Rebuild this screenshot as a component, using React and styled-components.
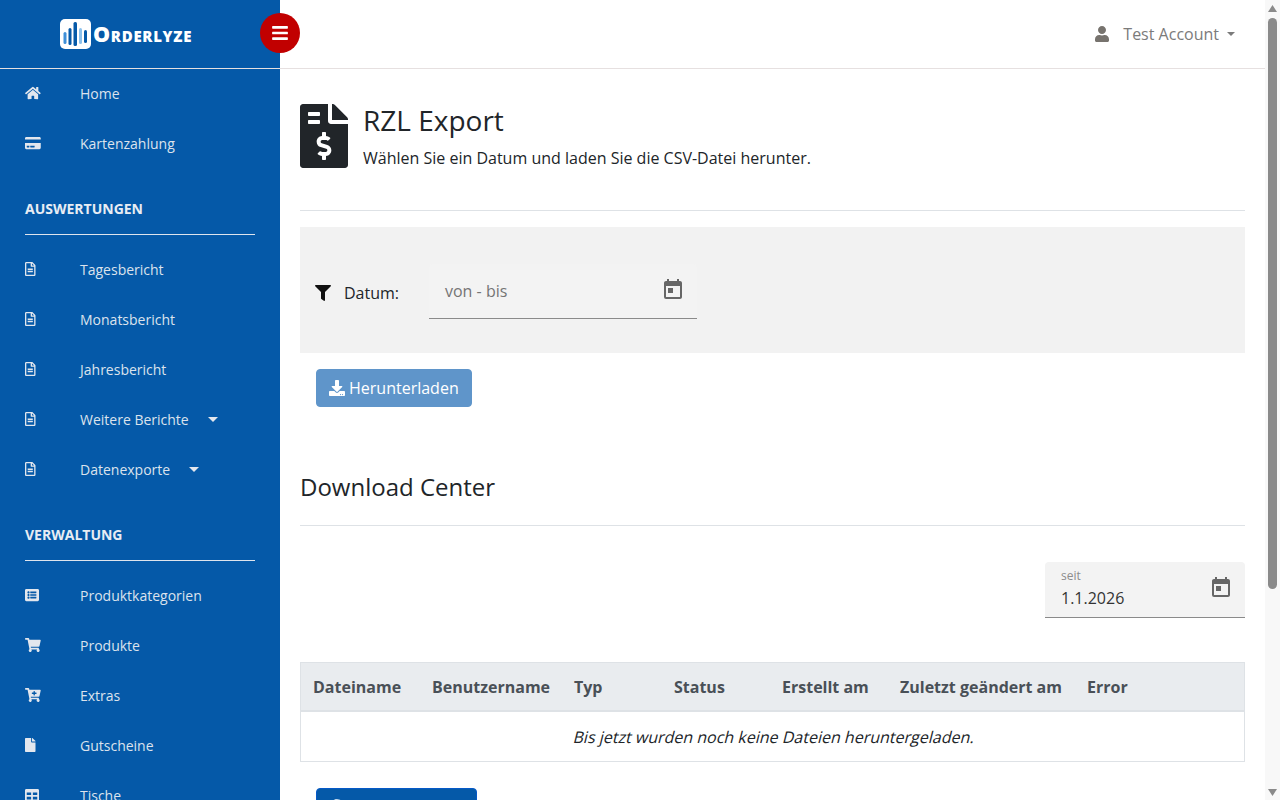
import React from 'react';
import styled, { createGlobalStyle } from 'styled-components';
import { FaHome, FaCreditCard, FaRegFileAlt, FaListAlt, FaShoppingCart, FaCartPlus, FaFile, FaTable, FaBars, FaUser, FaFilter, FaDownload, FaFileInvoiceDollar, FaSyncAlt } from 'react-icons/fa';
import { MdToday } from 'react-icons/md';

const Global = createGlobalStyle`
  * { box-sizing: border-box; }
  html, body { margin: 0; padding: 0; }
  body { font-family: "Open Sans", "Liberation Sans", sans-serif; font-size: 16px; color: #212529; background: #fff; }
`;

const Page = styled.div`display: flex; align-items: flex-start; min-height: 1077px; padding-right: 15px;`;
const ScrollRail = styled.div`
  position: fixed; top: 0; right: 0; bottom: 0; width: 15px; z-index: 5; background: #f8f8f8;
  display: flex; flex-direction: column; align-items: center;
`;
const ScrollArrow = styled.svg`flex: none; width: 15px; height: 17px; fill: #8a8a8a; display: block;`;
const ScrollThumb = styled.div`flex: none; width: 9px; height: 571px; margin-top: 1px; border-radius: 5px; background: #8a8a8a;`;
const ScrollFill = styled.div`flex: 1;`;
const Sidebar = styled.aside`
  position: sticky; top: 0; flex: 0 0 280px; width: 280px; height: 100vh; overflow: hidden;
  background: #0559a8; color: #dfe5ee;
`;
const Brand = styled.div`
  height: 69px; border-bottom: 1px solid #e6e0e0; display: flex; align-items: center; padding: 0 0 0 60px; gap: 2px;
`;
const BrandText = styled.span`
  color: #fff; font-weight: 800; font-size: 21.5px; font-variant: small-caps; letter-spacing: 0.7px; line-height: 1; margin-top: -1px;
`;
const Nav = styled.nav`display: flex; flex-direction: column; margin-top: -1px;`;
const Item = styled.a`
  height: 50px; flex: none; display: flex; align-items: center; padding-left: 25px; font-size: 14px; color: #dce3ed;
`;
const IconSlot = styled.span`
  flex: 0 0 55px; width: 55px; display: flex; align-items: center; color: #e3e7ee;
  & > svg { height: 14px; width: 16px; }
`;
const Caret = styled.span`
  width: 0; height: 0; margin-left: ${p => p.$gap || 19}px;
  border-left: 5px solid transparent; border-right: 5px solid transparent; border-top: 5px solid #e3e7ee;
`;
const SectionTitle = styled.div`
  margin: 16px 25px 9px; height: 51px; border-bottom: 1px solid #dfe5ee; padding-top: 15px;
  font-size: 14px; font-weight: 700; color: #e8edf4; text-transform: uppercase; line-height: 19px;
`;
const Main = styled.main`flex: 1; min-width: 0;`;
const Topbar = styled.header`
  height: 69px; border-bottom: 1px solid #e6e0e0; display: flex; align-items: center; justify-content: space-between; padding: 0 30px 0 0;
`;
const Toggle = styled.button`
  position: relative; z-index: 2;
  width: 40px; height: 40px; border-radius: 50%; border: 0; background: #c10000; color: #fff; padding: 0; margin: -3px 0 0 -20px;
  display: flex; align-items: center; justify-content: center; font-size: 18px;
`;
const Account = styled.div`
  display: flex; align-items: center; color: #7b7b7b; font-size: 16px; margin-top: -1px;
  & > svg { height: 16px; width: 14px; margin-right: 14px; color: #77736e; }
`;
const AccountCaret = styled.span`
  width: 0; height: 0; margin-left: 8px; border-left: 4.5px solid transparent; border-right: 4.5px solid transparent; border-top: 4.5px solid #7b7b7b;
`;
const Content = styled.div`padding: 35px 20px 0;`;
const TitleRow = styled.div`display: flex; align-items: flex-start; gap: 15px; height: 107px; border-bottom: 1px solid #dee2e6;`;
const TitleIcon = styled.div`line-height: 0; color: #212529; & svg { display: block; width: 48px; height: 64px; }`;
const TitleText = styled.div`display: flex; flex-direction: column;`;
const H1 = styled.h1`margin: -1px 0 0; font-size: 28px; font-weight: 400; line-height: 34px;`;
const Sub = styled.p`margin: 9px 0 0; font-size: 16px; line-height: 24px;`;
const FilterPanel = styled.section`
  margin-top: 16px; height: 126px; background: #f2f2f2; display: flex; align-items: center; padding: 2px 0 0 15px;
`;
const FilterLabel = styled.div`
  display: flex; align-items: center; font-size: 16px; width: 114px; margin-top: 3px;
  & > svg { font-size: 16px; margin-right: 13px; color: #111; }
`;
const DateField = styled.div`
  position: relative; width: ${p => p.$w}px; height: ${p => p.$h}px; background: #f3f3f3; border-bottom: 1px solid #8a8a8a; border-radius: 4px 4px 0 0; flex: none;
  & > svg { position: absolute; right: 12px; top: 14px; font-size: 24px; color: #666; }
`;
const Placeholder = styled.div`padding: 15px 16px; font-size: 16px; line-height: 24px; color: #757575;`;
const FloatLabel = styled.div`position: absolute; left: 16px; top: 6px; font-size: 12px; line-height: 16px; color: #8c8c8c;`;
const FieldValue = styled.div`position: absolute; left: 16px; top: 24px; font-size: 16px; line-height: 24px; color: #333;`;
const Button = styled.button`
  display: inline-flex; align-items: center; justify-content: flex-start; width: ${p => p.$w}px; height: 38px; border-radius: 4px; color: #fff; padding: 0 0 0 12px;
  font-family: inherit; font-size: 16px; gap: 4px; background: ${p => p.$bg}; border: 1px solid ${p => p.$border};
  & > svg { font-size: 16px; }
`;
const ButtonRow = styled.div`margin: 16px 0 0 16px; line-height: 0;`;
const H2 = styled.h2`margin: 62px 0 0; font-size: 24px; font-weight: 400; line-height: 36px; padding-bottom: 20px; border-bottom: 1px solid #dee2e6;`;
const RightRow = styled.div`display: flex; justify-content: flex-end; margin-top: 36px;`;
const Table = styled.table`
  margin-top: 44px; width: 100%; table-layout: fixed; border-collapse: separate; border-spacing: 0; border: 1px solid #dee2e6;
`;
const Th = styled.th`
  width: ${p => p.$w}px; background: #e9ecef; color: #495057; font-size: 16px; font-weight: 700; text-align: left; height: 49px; padding: 0 0 0 12px; border-bottom: 2px solid #dee2e6; white-space: nowrap;
`;
const Td = styled.td`height: 49px; text-align: center; font-size: 16px; padding: 0 0 0 3px;`;
const SlantedText = styled.span`display: inline-block; transform: skewX(-14deg);`;
const Footer = styled.div`margin: 26px 0 0 16px; line-height: 0;`;

const Logo = () => (
  <svg width="31" height="30" viewBox="0 0 31 30">
    <rect width="31" height="30" rx="5" fill="#fff" />
    <rect x="3.5" y="13" width="3" height="12" rx="1.5" fill="#3f8fd8" />
    <rect x="8.5" y="9" width="3" height="17" rx="1.5" fill="#0559a8" />
    <rect x="13.5" y="3" width="3.5" height="24" rx="1.5" fill="#0559a8" />
    <rect x="19" y="9" width="3" height="16" rx="1.5" fill="#8cc1ec" />
    <rect x="24" y="11" width="3" height="13" rx="1.5" fill="#0559a8" />
  </svg>
);

const navTop = [[FaHome, 'Home'], [FaCreditCard, 'Kartenzahlung']];
const reports = [[FaRegFileAlt, 'Tagesbericht'], [FaRegFileAlt, 'Monatsbericht'], [FaRegFileAlt, 'Jahresbericht'], [FaRegFileAlt, 'Weitere Berichte', 19], [FaRegFileAlt, 'Datenexporte', 19]];
const admin = [[FaListAlt, 'Produktkategorien'], [FaShoppingCart, 'Produkte'], [FaCartPlus, 'Extras'], [FaFile, 'Gutscheine'], [FaTable, 'Tische']];
const cols = [['Dateiname', 119], ['Benutzername', 142], ['Typ', 100], ['Status', 108], ['Erstellt am', 118], ['Zuletzt geändert am', 187], ['Error', 169]];

const NavItem = ({ icon: Icon, label, caret }) => (
  <Item>
    <IconSlot><Icon preserveAspectRatio="xMinYMid meet" /></IconSlot>
    {label}
    {caret && <Caret $gap={caret} />}
  </Item>
);

export default function App() {
  return (
    <>
      <Global />
      <Page>
        <Sidebar>
          <Brand><Logo /><BrandText>Orderlyze</BrandText></Brand>
          <Nav>
            {navTop.map(([i, l]) => <NavItem key={l} icon={i} label={l} />)}
            <SectionTitle>Auswertungen</SectionTitle>
            {reports.map(([i, l, c]) => <NavItem key={l} icon={i} label={l} caret={c} />)}
            <SectionTitle>Verwaltung</SectionTitle>
            {admin.map(([i, l]) => <NavItem key={l} icon={i} label={l} />)}
          </Nav>
        </Sidebar>
        <Main>
          <Topbar>
            <Toggle aria-label="Menü"><FaBars /></Toggle>
            <Account><FaUser />Test Account<AccountCaret /></Account>
          </Topbar>
          <Content>
            <TitleRow>
              <TitleIcon><FaFileInvoiceDollar /></TitleIcon>
              <TitleText>
                <H1>RZL Export</H1>
                <Sub>Wählen Sie ein Datum und laden Sie die CSV-Datei herunter.</Sub>
              </TitleText>
            </TitleRow>
            <FilterPanel>
              <FilterLabel><FaFilter />Datum:</FilterLabel>
              <DateField $w={268} $h={55}>
                <Placeholder>von - bis</Placeholder>
                <MdToday />
              </DateField>
            </FilterPanel>
            <ButtonRow><Button $w={156} $bg="#5f95ca" $border="#5f95ca"><FaDownload />Herunterladen</Button></ButtonRow>
            <H2>Download Center</H2>
            <RightRow>
              <DateField $w={200} $h={56}>
                <FloatLabel>seit</FloatLabel>
                <FieldValue>1.1.2026</FieldValue>
                <MdToday />
              </DateField>
            </RightRow>
            <Table>
              <thead>
                <tr>{cols.map(([c, w]) => <Th key={c} $w={w}>{c}</Th>)}</tr>
              </thead>
              <tbody>
                <tr><Td colSpan={7}><SlantedText>Bis jetzt wurden noch keine Dateien heruntergeladen.</SlantedText></Td></tr>
              </tbody>
            </Table>
            <Footer><Button $w={161} $bg="#0559a8" $border="#0559c8"><FaSyncAlt />Aktualisieren</Button></Footer>
          </Content>
        </Main>
      </Page>
      <ScrollRail aria-hidden="true">
        <ScrollArrow viewBox="0 0 15 17"><path d="M7.5 5 L12 12 L3 12 Z" /></ScrollArrow>
        <ScrollThumb />
        <ScrollFill />
        <ScrollArrow viewBox="0 0 15 17"><path d="M3 6 L12 6 L7.5 13 Z" /></ScrollArrow>
      </ScrollRail>
    </>
  );
}
